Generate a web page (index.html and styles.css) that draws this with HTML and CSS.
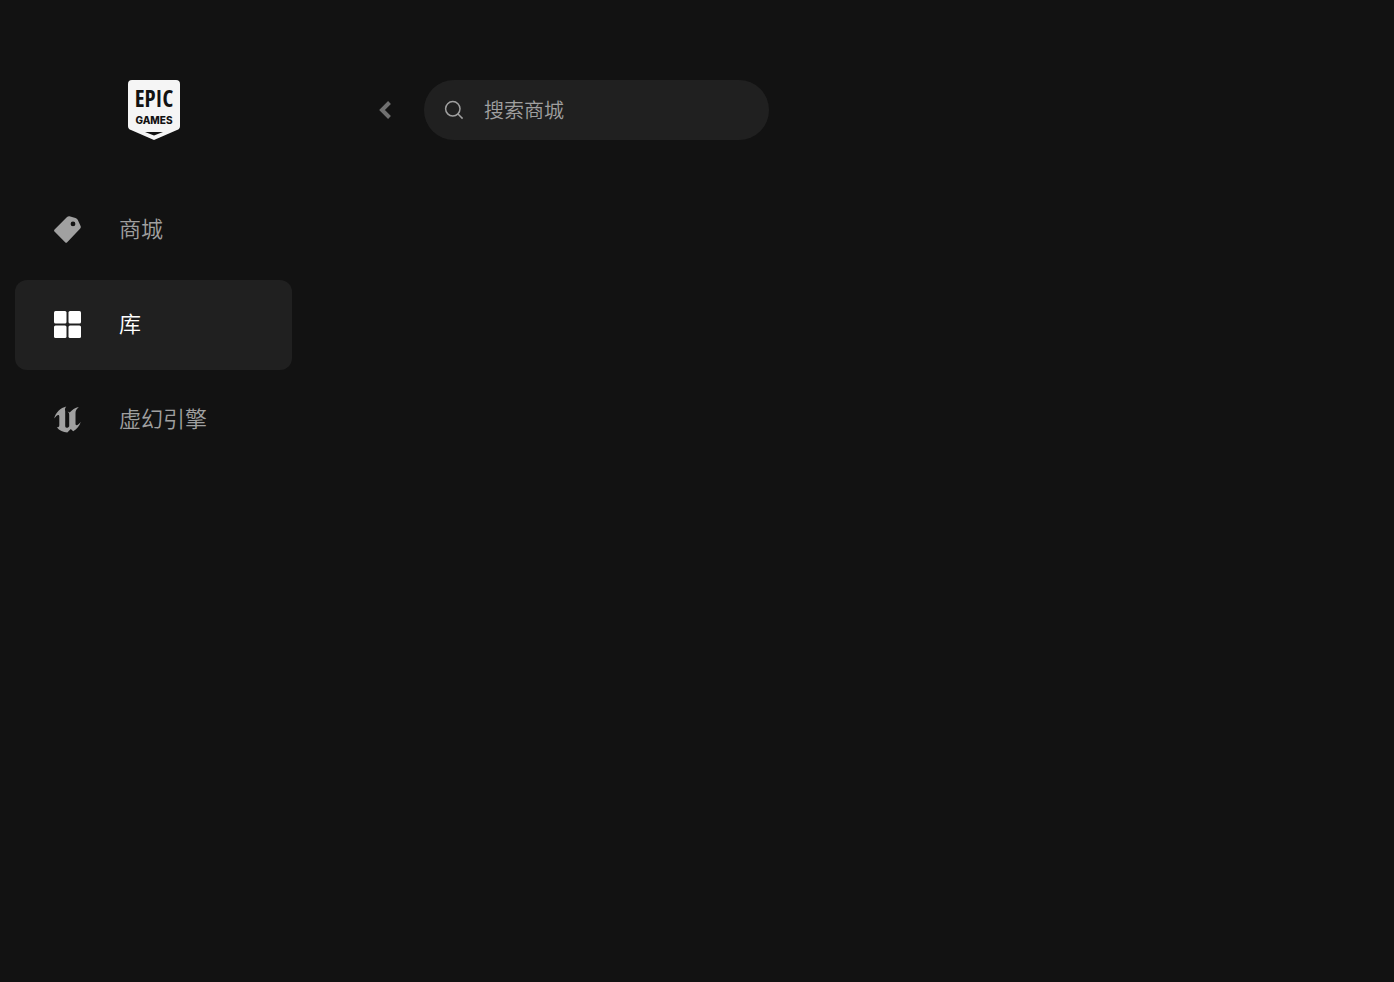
FILE: index.html
```html
<!DOCTYPE html>
<html lang="zh-CN">
<head>
<meta charset="utf-8">
<meta name="viewport" content="width=device-width, initial-scale=1">
<title>Epic Games</title>
<link rel="stylesheet" href="styles.css">
</head>
<body>
<div class="app">
  <aside class="sidebar">
    <a class="logo" href="#" aria-label="Epic Games">
      <svg width="52" height="60" viewBox="0 0 52 60">
        <path class="logo-shield" d="M4 0H48Q52 0 52 4V46Q52 49 49 50L26 60L3 50Q0 49 0 46V4Q0 0 4 0Z"/>
        <path class="logo-notch" d="M17 52H35L26 55.500Z"/>
        <text class="logo-epic" x="26" y="27" text-anchor="middle">EPIC</text>
        <text class="logo-games" x="26" y="44" text-anchor="middle">GAMES</text>
      </svg>
    </a>
    <nav class="nav">
      <a class="nav-item" href="#">
        <svg class="nav-icon" viewBox="0 0 27 27">
          <path fill-rule="evenodd" d="M.6 13.500 12.800 1.300Q13.900.2 15.400.3L21.500 1.900Q23 2.300 23.700 3.800L26.600 10Q27.200 11.600 26 12.800L13.200 26.200Q12.200 27.200 11.100 26.200L.5 15.600Q-.4 14.600.6 13.500ZM19 5.500a2.400 2.400 0 1 0 0 4.800 2.400 2.400 0 0 0 0-4.800Z"/>
        </svg>
        <span class="nav-label">商城</span>
      </a>
      <a class="nav-item active" href="#" aria-current="page">
        <svg class="nav-icon" viewBox="0 0 27 27">
          <rect width="12.500" height="12.500" rx="1.500"/>
          <rect x="14.500" width="12.500" height="12.500" rx="1.500"/>
          <rect y="14.500" width="12.500" height="12.500" rx="1.500"/>
          <rect x="14.500" y="14.500" width="12.500" height="12.500" rx="1.500"/>
        </svg>
        <span class="nav-label">库</span>
      </a>
      <a class="nav-item" href="#">
        <svg class="nav-icon" viewBox="0 0 27 27">
          <path d="M12.300.6C6.500 2 1.600 6.500.2 12.600C1.700 10.300 3.200 8.900 4.200 8.900C5 8.900 5.300 9.500 5.300 10.500V19.300C5.300 21 4.200 21.500 2.800 21.300C5.200 24.800 9.300 26.300 13.300 26.600L16.800 23L19.200 25.300C22.800 23.300 25.600 20 26.800 15.800C25.200 18 23.600 19.200 22.600 19.200C21.800 19.200 21.500 18.700 21.500 17.800V6.700C21.500 4.800 22.700 2.800 24.800 1C21 1.800 18 3.900 15.700 6.500C15.300 6 14.500 5.700 13.600 5.800C14.800 6.500 15.200 7.400 15.200 8.700V20.200C14.500 21.200 13.600 21.800 12.700 21.800C11.600 21.800 11.200 21.100 11.200 19.800V5C10.600 3.200 11.200 1.900 12.300.6Z"/>
        </svg>
        <span class="nav-label">虚幻引擎</span>
      </a>
    </nav>
  </aside>
  <main class="main">
    <header class="topbar">
      <button class="back" type="button" aria-label="返回">
        <svg width="12" height="18" viewBox="0 0 12 18"><path d="M10.500 1.500 3 9l7.500 7.500"/></svg>
      </button>
      <label class="search">
        <svg width="20" height="20" viewBox="0 0 20 20"><circle cx="8.800" cy="8.800" r="7.200"/><path d="m14 14 4.600 4.600"/></svg>
        <input class="search-input" type="search" placeholder="搜索商城" aria-label="搜索商城">
      </label>
    </header>
  </main>
</div>
</body>
</html>
```

FILE: styles.css
```css
* {
  box-sizing: border-box;
}

body {
  margin: 0;
  background: #121212;
  color: #a0a0a0;
  font-family: "Noto Sans CJK SC", sans-serif;
  font-weight: 350;
}

.app {
  display: flex;
  min-height: 100vh;
}

.sidebar {
  display: flex;
  flex: 0 0 307px;
  flex-direction: column;
  gap: 45px;
  padding: 80px 15px 15px;
}

.logo {
  align-self: center;
  height: 60px;
}

.logo-shield {
  fill: #f5f5f5;
}

.logo-notch,
.logo-epic,
.logo-games {
  fill: #121212;
}

.logo-epic {
  font: bold 23px "Noto Sans ExtraCondensed", "Open Sans Condensed", "Roboto Condensed", "Noto Sans Condensed", "Noto Sans CJK SC", sans-serif;
}

.logo-games {
  font: 800 10px Inter, sans-serif;
}

.nav {
  display: flex;
  flex-direction: column;
  gap: 5px;
}

.nav-item {
  display: flex;
  align-items: center;
  gap: 38px;
  height: 90px;
  padding: 0 39px 1px;
  border-radius: 12px;
  color: #a0a0a0;
  font-size: 22px;
  line-height: 30px;
  text-decoration: none;
}

.nav-item.active {
  background: #202020;
  color: #fff;
}

.nav-icon {
  flex: none;
  width: 27px;
  height: 27px;
  fill: currentColor;
}

.nav-label {
  padding-bottom: 5px;
}

.main {
  flex: 1;
  padding: 80px 72px;
}

.topbar {
  display: flex;
  align-items: center;
  gap: 33px;
}

.back {
  display: flex;
  padding: 0;
  border: 0;
  background: none;
  color: #707070;
}

.back svg {
  fill: none;
  stroke: currentColor;
  stroke-width: 4;
}

.search {
  display: flex;
  flex: 0 1 345px;
  align-items: center;
  gap: 20px;
  height: 60px;
  padding: 0 20px;
  border-radius: 30px;
  background: #202020;
}

.search svg {
  flex: none;
  fill: none;
  stroke: #a0a0a0;
  stroke-width: 1.5;
}

.search-input {
  flex: 1;
  min-width: 0;
  padding: 0;
  border: 0;
  outline: 0;
  background: none;
  color: #f5f5f5;
  font: inherit;
  font-size: 20px;
  line-height: 30px;
}

.search-input::placeholder {
  color: #a0a0a0;
}
```
